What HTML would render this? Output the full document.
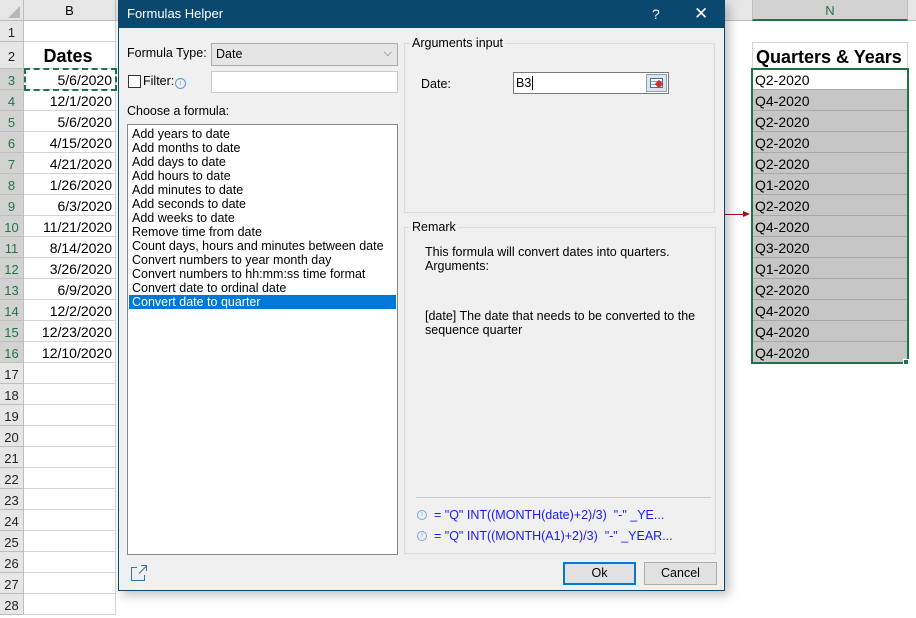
<!DOCTYPE html>
<html><head><style>
*{box-sizing:border-box;margin:0;padding:0}
body{width:916px;height:598px;position:relative;overflow:hidden;background:#fff;font-family:"Liberation Sans",sans-serif}
.a{position:absolute}
.rh{position:absolute;left:0;width:24px;background:#e6e6e6;border-bottom:1px solid #bdbdbd;border-right:1px solid #bdbdbd;font-size:13px;text-align:center;color:#222}
.cb{position:absolute;left:24px;width:92px;border-bottom:1px solid #d4d4d4;border-right:1px solid #d4d4d4;font-size:14px;text-align:right;padding-right:3px}
.cn{position:absolute;left:752px;width:155px;border-bottom:1px solid #a8a8a8;background:#c6c6c6;font-size:14px;padding-left:3px}
.dl{font-size:12.5px;color:#000;position:absolute;white-space:nowrap}
.li{height:14px;line-height:14px;padding-left:3px;font-size:12.5px;white-space:nowrap}
</style></head><body>
<div class="a" style="left:0;top:0;width:916px;height:21px;background:#e6e6e6;border-bottom:1px solid #bdbdbd"></div>
<div class="a" style="left:0;top:0;width:24px;height:21px;border-right:1px solid #bdbdbd"></div>
<div class="a" style="left:8px;top:6px;width:0;height:0;border-left:12px solid transparent;border-bottom:12px solid #b8b8b8"></div>
<div class="a" style="left:24px;top:0;width:92px;height:21px;border-right:1px solid #bdbdbd;font-size:13px;text-align:center;line-height:21px">B</div>
<div class="a" style="left:752px;top:0;width:156px;height:21px;background:#d2d2d2;border-bottom:2px solid #217346;border-left:1px solid #bdbdbd;border-right:1px solid #bdbdbd;font-size:13px;text-align:center;line-height:21px;color:#217346">N</div>
<div id="rows"></div>
<script>
var h='',tops=[21,42],hs=[21,27];
for(var r=3;r<=28;r++){tops.push(69+(r-3)*21);hs.push(21);}
var d=['5/6/2020','12/1/2020','5/6/2020','4/15/2020','4/21/2020','1/26/2020','6/3/2020','11/21/2020','8/14/2020','3/26/2020','6/9/2020','12/2/2020','12/23/2020','12/10/2020'];
var q=['Q2-2020','Q4-2020','Q2-2020','Q2-2020','Q2-2020','Q1-2020','Q2-2020','Q4-2020','Q3-2020','Q1-2020','Q2-2020','Q4-2020','Q4-2020','Q4-2020'];
for(var i=0;i<28;i++){var r=i+1,t=tops[i],ht=hs[i];
var sel=(r>=3&&r<=16);
h+='<div class="rh" style="top:'+t+'px;height:'+ht+'px;line-height:'+(ht+3)+'px;'+(sel?'background:#d2d2d2;color:#217346':'')+'">'+r+'</div>';
var txt=r==2?'<b style="font-size:18px">Dates</b>':(sel?d[r-3]:'');
h+='<div class="cb" style="top:'+t+'px;height:'+ht+'px;line-height:'+(ht+2)+'px;'+(r==2?'text-align:center;':'')+'">'+txt+'</div>';
if(sel)h+='<div class="cn" style="top:'+t+'px;height:'+ht+'px;line-height:'+(ht+1)+'px;'+(r==3?'background:#fff':'')+'">'+q[r-3]+'</div>';
}
document.getElementById('rows').innerHTML=h;
</script>
<div class="a" style="left:752px;top:42px;width:156px;height:27px;border:1px solid #d4d4d4;font-size:18px;font-weight:bold;line-height:28px;padding-left:3px">Quarters &amp; Years</div>
<div class="a" style="left:751px;top:68px;width:158px;height:296px;border:2px solid #217346"></div>
<div class="a" style="left:903px;top:359px;width:6px;height:6px;background:#217346;border:1px solid #fff"></div>
<div class="a" style="left:24px;top:68px;width:93px;height:23px;border:2px dashed #217346"></div>
<div class="a" style="left:725px;top:214px;width:20px;height:1px;background:#a01010"></div>
<div class="a" style="left:743px;top:211px;border-left:7px solid #a01010;border-top:3px solid transparent;border-bottom:3px solid transparent"></div>
<div class="a" style="left:118px;top:0;width:607px;height:591px;background:#f0f0f0;border:1px solid #0a4a70;box-shadow:4px 4px 10px rgba(0,0,0,.25)">
 <div class="a" style="left:-1px;top:0;width:607px;height:27px;background:#0a4870;color:#fff;font-size:13px;line-height:26px;padding-left:9px">Formulas Helper
  <span class="a" style="left:534px;top:0;font-size:14px">?</span>
  <span class="a" style="left:576px;top:0;font-size:17px;font-weight:100">✕</span></div>
</div>
<div class="dl" style="left:127px;top:46px">Formula Type:</div>
<div class="a" style="left:211px;top:43px;width:187px;height:23px;background:#e5e5e5;border:1px solid #adadad;font-size:12.5px;line-height:21px;padding-left:4px">Date<span class="a" style="right:5px;top:-1px;font-size:11px;color:#555">⌵</span></div>
<div class="a" style="left:128px;top:75px;width:13px;height:13px;border:1px solid #333;background:#fff"></div>
<div class="dl" style="left:143px;top:74px">Filter:</div>
<div class="a" style="left:175px;top:78px;width:11px;height:11px;border:1px solid #5b9bd5;border-radius:50%;font-size:7px;color:#5b9bd5;text-align:center;line-height:9px">i</div>
<div class="a" style="left:211px;top:71px;width:187px;height:22px;background:#fff;border:1px solid #c8c8c8"></div>
<div class="dl" style="left:127px;top:104px">Choose a formula:</div>
<div class="a" style="left:127px;top:124px;width:271px;height:431px;background:#fff;border:1px solid #828790;padding:2px 1px">
<div class="li">Add years to date</div><div class="li">Add months to date</div><div class="li">Add days to date</div><div class="li">Add hours to date</div><div class="li">Add minutes to date</div><div class="li">Add seconds to date</div><div class="li">Add weeks to date</div><div class="li">Remove time from date</div><div class="li">Count days, hours and minutes between date</div><div class="li">Convert numbers to year month day</div><div class="li">Convert numbers to hh:mm:ss time format</div><div class="li">Convert date to ordinal date</div><div class="li" style="background:#0078d7;color:#fff">Convert date to quarter</div>
</div>
<svg class="a" style="left:130px;top:564px" width="20" height="18"><path d="M7 3.5H1.5V16.5H14.5V11" stroke="#3b6fa8" fill="none"/><path d="M9 9.5L16.5 2M11 1.5H16.5V7" stroke="#3b6fa8" fill="none"/></svg>
<div class="a" style="left:404px;top:43px;width:311px;height:170px;border:1px solid #dcdcdc"></div>
<div class="dl" style="left:410px;top:36px;background:#f0f0f0;padding:0 2px">Arguments input</div>
<div class="dl" style="left:421px;top:77px">Date:</div>
<div class="a" style="left:513px;top:72px;width:156px;height:22px;background:#fff;border:1px solid #7a7a7a;font-size:12.5px;line-height:20px;padding-left:2px">B3<span style="border-left:1px solid #000;margin-left:1px"></span></div>
<div class="a" style="left:646px;top:74px;width:21px;height:18px;background:#dde4ee;border:1px solid #8aa;"><div style="margin:3px 3px;width:13px;height:10px;border:1px solid #4a6fa5;background:repeating-linear-gradient(#fff 0 2px,#7b9cc8 2px 3px)"></div><div class="a" style="left:9px;top:6px;width:6px;height:6px;background:#d0302a;transform:rotate(45deg)"></div></div>
<div class="a" style="left:404px;top:227px;width:312px;height:327px;border:1px solid #dcdcdc"></div>
<div class="dl" style="left:410px;top:220px;background:#f0f0f0;padding:0 2px">Remark</div>
<div class="dl" style="left:425px;top:245px;line-height:14px">This formula will convert dates into quarters.<br>Arguments:</div>
<div class="dl" style="left:425px;top:309px;line-height:14px">[date] The date that needs to be converted to the<br>sequence quarter</div>
<div class="a" style="left:416px;top:497px;width:295px;height:1px;background:#c8c8c8"></div>
<div class="a" style="left:417px;top:510px;width:10px;height:10px;border:1px solid #7aa6dc;border-radius:50%;font-size:7px;color:#7aa6dc;text-align:center;line-height:8px">i</div>
<div class="dl" style="left:434px;top:508px;color:#1a1aff">= "Q" INT((MONTH(date)+2)/3)&nbsp; "-" _YE...</div>
<div class="a" style="left:417px;top:531px;width:10px;height:10px;border:1px solid #7aa6dc;border-radius:50%;font-size:7px;color:#7aa6dc;text-align:center;line-height:8px">i</div>
<div class="dl" style="left:434px;top:529px;color:#1a1aff">= "Q" INT((MONTH(A1)+2)/3)&nbsp; "-" _YEAR...</div>
<div class="a" style="left:563px;top:562px;width:73px;height:23px;background:#e1e1e1;border:2px solid #0078d7;font-size:12.5px;text-align:center;line-height:19px">Ok</div>
<div class="a" style="left:644px;top:562px;width:73px;height:23px;background:#e1e1e1;border:1px solid #adadad;font-size:12.5px;text-align:center;line-height:21px">Cancel</div>
</body></html>
